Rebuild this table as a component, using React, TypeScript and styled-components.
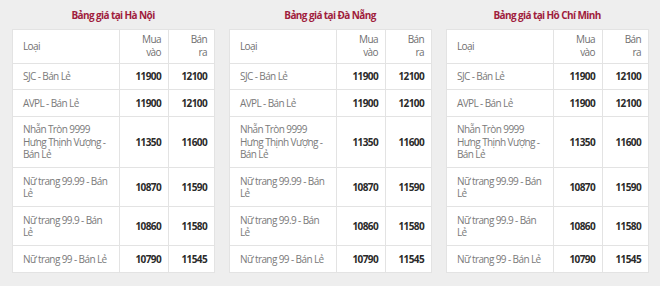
import React from "react";
import styled, { createGlobalStyle } from "styled-components";

const GlobalStyle = createGlobalStyle`
  html, body {
    margin: 0;
    padding: 0;
    background: #eeeeee;
  }
  body {
    font-family: "Open Sans", "Noto Sans", sans-serif;
  }
`;

type Row = { name: string; buy: string; sell: string };

const rows: Row[] = [
  { name: "SJC - Bán Lẻ", buy: "11900", sell: "12100" },
  { name: "AVPL - Bán Lẻ", buy: "11900", sell: "12100" },
  { name: "Nhẫn Tròn 9999 Hưng Thịnh Vượng - Bán Lẻ", buy: "11350", sell: "11600" },
  { name: "Nữ trang 99.99 - Bán Lẻ", buy: "10870", sell: "11590" },
  { name: "Nữ trang 99.9 - Bán Lẻ", buy: "10860", sell: "11580" },
  { name: "Nữ trang 99 - Bán Lẻ", buy: "10790", sell: "11545" },
];

const cities = ["Hà Nội", "Đà Nẵng", "Hồ Chí Minh"];

const Page = styled.div`
  display: grid;
  grid-template-columns: repeat(3, 202px);
  column-gap: 15px;
  padding: 0 12px;
  height: 286px;
  background: #eeeeee;
`;

const Panel = styled.section`
  display: flex;
  flex-direction: column;
`;

const Title = styled.h3`
  margin: 0;
  padding-top: 1px;
  height: 28px;
  line-height: 28px;
  text-align: center;
  font-size: 10px;
  letter-spacing: -0.6px;
  font-weight: 700;
  color: #a01c3c;
`;

const Table = styled.table`
  width: 202px;
  border-collapse: collapse;
  table-layout: fixed;
  background: #ffffff;
  font-size: 10px;
  letter-spacing: -0.6px;
  line-height: 12.5px;
`;

const Cell = styled.td<{ $num?: boolean; $head?: boolean }>`
  border: 1px solid #e3e3e3;
  padding: ${({ $head, $num }) =>
    `${$head ? "3px" : "6.5px"} 7px ${$head ? "3px" : "6.5px"} ${$num ? "4px" : "10px"}`};
  text-align: ${({ $num }) => ($num ? "right" : "left")};
  vertical-align: middle;
  line-height: ${({ $head }) => ($head ? "13.3px" : "12.5px")};
  color: ${({ $num, $head }) => ($head ? "#6f6f6f" : $num ? "#2a2a2a" : "#7a7a7a")};
  font-weight: ${({ $num, $head }) => ($num && !$head ? 700 : 400)};
`;

const HeadCell = styled(Cell).attrs({ as: "th", $head: true })``;

export default function App() {
  return (
    <>
      <GlobalStyle />
      <Page>
        {cities.map((city) => (
          <Panel key={city}>
            <Title>Bảng giá tại {city}</Title>
            <Table>
              <colgroup>
                <col style={{ width: 107 }} />
                <col style={{ width: 49 }} />
                <col style={{ width: 46 }} />
              </colgroup>
              <thead>
                <tr>
                  <HeadCell>Loại</HeadCell>
                  <HeadCell $num>
                    Mua
                    <br />
                    vào
                  </HeadCell>
                  <HeadCell $num>
                    Bán
                    <br />
                    ra
                  </HeadCell>
                </tr>
              </thead>
              <tbody>
                {rows.map((r) => (
                  <tr key={r.name}>
                    <Cell>{r.name}</Cell>
                    <Cell $num>{r.buy}</Cell>
                    <Cell $num>{r.sell}</Cell>
                  </tr>
                ))}
              </tbody>
            </Table>
          </Panel>
        ))}
      </Page>
    </>
  );
}
